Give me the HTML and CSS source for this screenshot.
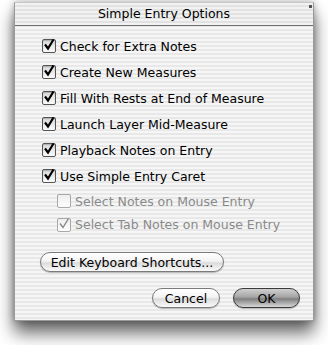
FILE: index.html
```html
<!DOCTYPE html>
<html lang="en">
<head>
	<meta charset="UTF-8">
	<title>Simple Entry Options</title>
	<link rel="stylesheet" href="styles.css">
</head>
<body>
	<div class="window">
		<div class="titlebar">Simple Entry Options<span class="toggle"></span></div>
		<div class="content">
			<ul class="options">
				<li><span class="box"><svg viewBox="0 0 14 14"><path d="M3 6.5 L6 10.5 L11.5 1.5" /></svg></span>Check for Extra Notes</li>
				<li><span class="box"><svg viewBox="0 0 14 14"><path d="M3 6.5 L6 10.5 L11.5 1.5" /></svg></span>Create New Measures</li>
				<li><span class="box"><svg viewBox="0 0 14 14"><path d="M3 6.5 L6 10.5 L11.5 1.5" /></svg></span>Fill With Rests at End of Measure</li>
				<li><span class="box"><svg viewBox="0 0 14 14"><path d="M3 6.5 L6 10.5 L11.5 1.5" /></svg></span>Launch Layer Mid-Measure</li>
				<li><span class="box"><svg viewBox="0 0 14 14"><path d="M3 6.5 L6 10.5 L11.5 1.5" /></svg></span>Playback Notes on Entry</li>
				<li><span class="box"><svg viewBox="0 0 14 14"><path d="M3 6.5 L6 10.5 L11.5 1.5" /></svg></span>Use Simple Entry Caret</li>
				<li class="sub off"><span class="box"></span>Select Notes on Mouse Entry</li>
				<li class="sub off"><span class="box"><svg viewBox="0 0 14 14"><path d="M3 6.5 L6 10.5 L11.5 1.5" /></svg></span>Select Tab Notes on Mouse Entry</li>
			</ul>
			<div class="shortcuts">
				<span class="btn">Edit Keyboard Shortcuts...</span>
			</div>
			<div class="actions">
				<span class="btn">Cancel</span>
				<span class="btn ok">OK</span>
			</div>
		</div>
	</div>
</body>
</html>
```
FILE: styles.css
```css
*{
	padding: 0;
	margin: 0;
	box-sizing: border-box;
}
body{
	width: 328px;
	height: 345px;
	background: #fff;
	font-family: "DejaVu Sans", "Liberation Sans", sans-serif;
	font-size: 12.5px;
	color: #000;
	padding: 2px 0 0 14px;
}
.window{
	width: 300px;
	height: 319px;
	border: 1px solid #9a9a9a;
	border-top-color: #c8c8c8;
	background: repeating-linear-gradient(to bottom, #f6f6f6 0px, #f6f6f6 2px, #e8e8e8 2px, #e8e8e8 4px);
	box-shadow: 0 12px 16px rgba(0,0,0,.6), 0 0 7px rgba(0,0,0,.3);
}
.titlebar{
	position: relative;
	height: 23px;
	line-height: 22px;
	text-align: center;
	font-size: 12.5px;
	border-bottom: 1px solid #707070;
	background: repeating-linear-gradient(to bottom, #f2f2f2 0px, #f2f2f2 2px, #e2e2e2 2px, #e2e2e2 4px);
}
.toggle{
	position: absolute;
	top: 2px;
	right: 1px;
	width: 3px;
	height: 3px;
	background: #555;
}
.content{
	padding: 7px 13px 0 27px;
}
.options{
	list-style: none;
}
.options li{
	display: flex;
	align-items: center;
	height: 26px;
	gap: 4px;
}
.options li.sub{
	height: 24px;
	padding-left: 15px;
}
.options li.sub:last-child{
	height: 23px;
}
.box{
	width: 14px;
	height: 14px;
	border: 1px solid #555;
	border-radius: 2px;
	background: linear-gradient(#d8d8d8, #fbfbfb);
	box-shadow: inset 0 1px 1px rgba(0,0,0,.2);
	flex: none;
}
.box svg{
	display: block;
	width: 14px;
	height: 14px;
	margin: -2px 0 0 -1px;
	overflow: visible;
}
.box path{
	fill: none;
	stroke: #000;
	stroke-width: 2.2;
	stroke-linejoin: miter;
}
.off{
	color: #8a8a8a;
}
.off .box{
	border-color: #a8a8a8;
	background: linear-gradient(#eeeeee, #fdfdfd);
	box-shadow: none;
}
.off .box path{
	stroke: #8a8a8a;
	stroke-width: 1.4;
}
.shortcuts{
	margin: 16px 0 0 -2px;
}
.btn{
	display: inline-flex;
	align-items: center;
	justify-content: center;
	height: 20px;
	padding: 0 8px;
	border: 1px solid #7a7a7a;
	border-radius: 10px;
	background: linear-gradient(#ffffff 0%, #f4f4f4 45%, #dcdcdc 55%, #fafafa 100%);
	box-shadow: 0 1px 1px rgba(0,0,0,.25);
}
.shortcuts .btn{
	width: 184px;
}
.actions{
	display: flex;
	justify-content: flex-end;
	gap: 13px;
	margin-top: 16px;
}
.actions .btn{
	width: 68px;
}
.btn.ok{
	width: 67px;
	border-color: #3a3a3a;
	background: linear-gradient(#d0d0d0 0%, #a4a4a4 45%, #808080 55%, #d8d8d8 100%);
}
```
